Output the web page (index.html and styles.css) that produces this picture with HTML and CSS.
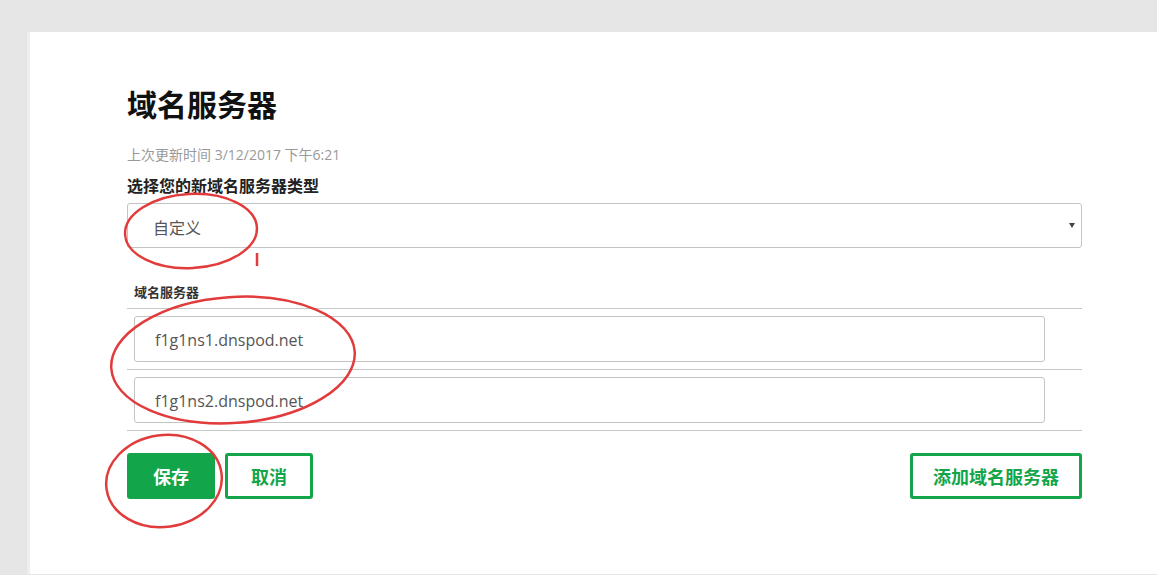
FILE: index.html
```html
<!DOCTYPE html>
<html lang="zh-CN">
<head>
<meta charset="utf-8">
<title>域名服务器</title>
<link rel="stylesheet" href="styles.css">
</head>
<body>
<div class="page">
  <div class="card">
    <h1 class="title">域名服务器</h1>
    <p class="updated">上次更新时间 3/12/2017 下午6:21</p>
    <p class="type-label">选择您的新域名服务器类型</p>
    <div class="select">
      <span class="select-value">自定义</span>
      <svg class="select-arrow" width="6" height="5" viewBox="0 0 6 5"><path d="M0 0H6L3 5Z" fill="#444"/></svg>
    </div>
    <div class="ns-label">域名服务器</div>
    <div class="ns-list">
      <div class="ns-row"><div class="ns-input">f1g1ns1.dnspod.net</div></div>
      <div class="ns-row"><div class="ns-input">f1g1ns2.dnspod.net</div></div>
    </div>
    <div class="actions">
      <div class="actions-left">
        <button class="btn btn-primary">保存</button>
        <button class="btn btn-outline">取消</button>
      </div>
      <button class="btn btn-outline btn-add">添加域名服务器</button>
    </div>
  </div>
  <svg class="marks" width="1157" height="575" viewBox="0 0 1157 575">
    <ellipse cx="191" cy="231" rx="66" ry="37" transform="rotate(-3 191 231)"/>
    <line x1="257" y1="253" x2="257" y2="266"/>
    <ellipse cx="233" cy="360" rx="122" ry="63" transform="rotate(-4 233 360)"/>
    <ellipse cx="164" cy="481" rx="58" ry="46" transform="rotate(-8 164 481)"/>
  </svg>
</div>
</body>
</html>
```

FILE: styles.css
```css
* { box-sizing: border-box; }
html, body {
  margin: 0;
  padding: 0;
  background: #e6e6e6;
}
body {
  font-family: "Open Sans", "Noto Sans CJK SC", sans-serif;
  color: #222;
  overflow: hidden;
}
.page {
  position: relative;
  width: 1157px;
  height: 575px;
  padding-top: 32px;
  padding-left: 30px;
}
.card {
  background: #fff;
  height: 542px;
  padding: 51px 0 0 97px;
  box-shadow: -3px 0 0 #eeeeee;
}
.title {
  margin: 0;
  font-family: "Noto Sans CJK SC", sans-serif;
  font-size: 30px;
  line-height: 40px;
  font-weight: 700;
  color: #111;
}
.updated {
  margin: 22px 0 0;
  font-size: 14px;
  line-height: 20px;
  color: #999;
}
.type-label {
  margin: 9px 0 0;
  font-family: "Noto Sans CJK SC", sans-serif;
  font-size: 16px;
  line-height: 22px;
  font-weight: 700;
  color: #222;
}
.select {
  margin-top: 7px;
  width: 955px;
  height: 45px;
  border: 1px solid #c4c4c4;
  border-radius: 3px;
  display: flex;
  align-items: center;
  justify-content: space-between;
  padding: 2px 6px 0 25px;
}
.select-value {
  font-family: "Noto Sans CJK SC", sans-serif;
  font-size: 16px;
  color: #555;
}
.select-arrow { display: block; margin-top: -2px; }
.ns-label {
  margin-top: 35px;
  padding-left: 7px;
  font-family: "Noto Sans CJK SC", sans-serif;
  font-size: 13px;
  line-height: 18px;
  font-weight: 700;
  color: #333;
}
.ns-list {
  margin-top: 7px;
  width: 955px;
  border-bottom: 1px solid #c8c8c8;
}
.ns-row {
  border-top: 1px solid #c8c8c8;
  padding: 7px 37px 7px 7px;
}
.ns-input {
  height: 46px;
  border: 1px solid #c4c4c4;
  border-radius: 3px;
  display: flex;
  align-items: center;
  padding: 2px 0 0 20px;
  font-size: 16px;
  color: #555;
}
.actions {
  margin-top: 22px;
  width: 955px;
  display: flex;
  justify-content: space-between;
}
.actions-left {
  display: flex;
  gap: 10px;
}
.btn {
  height: 46px;
  border-radius: 3px;
  font-family: "Noto Sans CJK SC", sans-serif;
  font-size: 18px;
  font-weight: 700;
  line-height: 1;
  cursor: pointer;
  display: flex;
  align-items: center;
  justify-content: center;
}
.btn-primary {
  width: 88px;
  background: #12a54a;
  border: 0;
  color: #fff;
}
.btn-outline {
  width: 88px;
  background: #fff;
  border: 3px solid #12a54a;
  color: #12a54a;
}
.btn-add {
  width: 172px;
}
.marks {
  position: absolute;
  left: 0;
  top: 0;
  pointer-events: none;
  fill: none;
  stroke: #e23b3b;
  stroke-width: 2.5;
}
```
